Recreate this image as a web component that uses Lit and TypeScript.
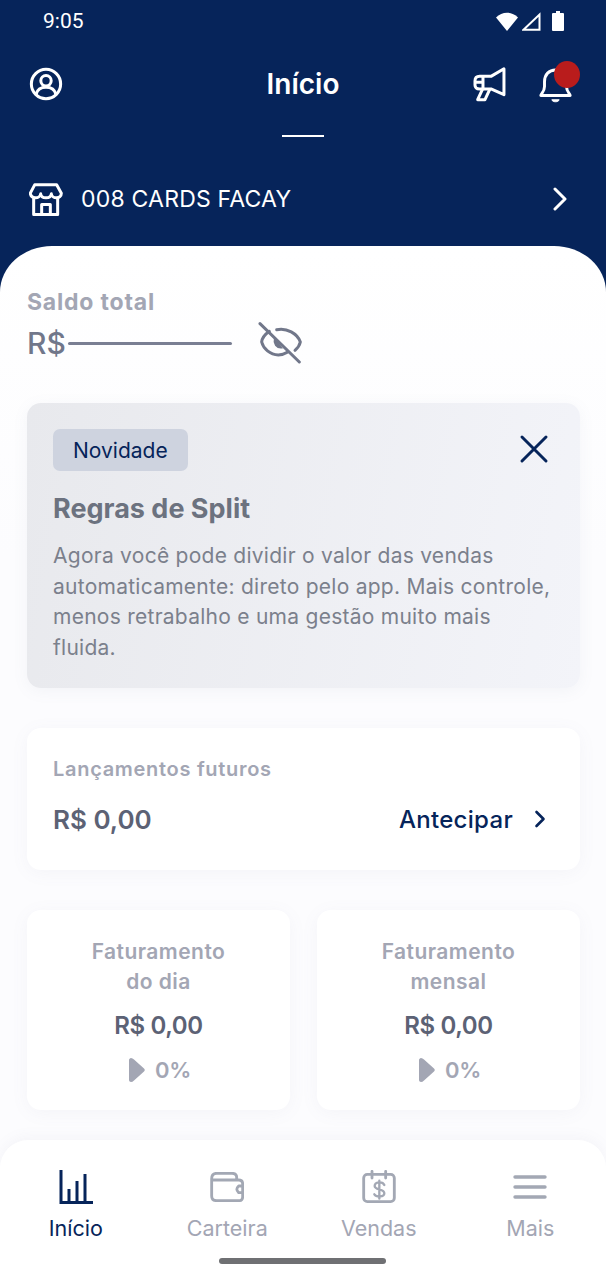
import { LitElement, html, css } from "lit";
import { customElement } from "lit/decorators.js";

const NAVY = "#06245a";

@customElement("app-root")
export class AppRoot extends LitElement {
  static styles = css`
    :host { display: block; width: 606px; height: 1280px; overflow: hidden; font-family: Inter, "Noto Sans", sans-serif; }
    * { box-sizing: border-box; }
    svg { display: block; flex: none; }
    .page { position: relative; width: 606px; height: 1280px; background: #06245a; display: flex; flex-direction: column; color: #fff; }
    .status { height: 42px; padding: 0 42px 0 43px; display: flex; align-items: center; justify-content: space-between; }
    .time { font-family: Roboto, sans-serif; font-size: 21px; }
    .status-icons { display: flex; align-items: center; gap: 4px; }
    .batt { margin-left: 7px; }
    .top { height: 84px; padding: 0 32px 0 29px; display: flex; align-items: center; justify-content: space-between; }
    .top h1 { margin: 0; font-size: 28px; font-weight: 600; position: absolute; left: 0; right: 0; text-align: center; pointer-events: none; }
    .top-actions { display: flex; align-items: center; gap: 33px; }
    .bell { position: relative; width: 35px; height: 42px; padding-top: 2px; }
    .dot { position: absolute; right: -6px; top: -2px; width: 26px; height: 27px; border-radius: 50%; background: #b91c1c; }
    .rule { width: 42px; height: 2px; background: #fff; margin: 9px auto 0; }
    .store { height: 112px; padding: 12px 38px 0 29px; display: flex; align-items: center; justify-content: space-between; }
    .store-l { display: flex; align-items: center; gap: 18px; font-size: 23px; letter-spacing: .2px; font-weight: 400; }
    .sheet { flex: 1; background: linear-gradient(#ffffff, #fcfcfe 30%); border-radius: 52px 52px 0 0 / 46px 46px 0 0; margin-top: -3px; padding: 41px 26px 0 27px; color: #6b7280; min-height: 0; overflow: hidden; }
    .saldo-l { font-size: 23px; font-weight: 700; color: #a3a6b4; line-height: 30px; letter-spacing: .8px; }
    .saldo { height: 52px; display: flex; align-items: center; }
    .saldo .cur { font-size: 30px; font-weight: 500; color: #71778a; }
    .saldo .mask { width: 164px; height: 3px; border-radius: 2px; background: #7a7f93; margin: 0 26px 0 2px; }
    .banner { margin-top: 34px; height: 285px; border-radius: 14px; background: linear-gradient(100deg, #e8e9ed, #f3f4f9); padding: 26px 26px 0 26px; box-shadow: 0 3px 16px rgba(120,125,150,.07); position: relative; }
    .tag { display: inline-flex; align-items: center; height: 42px; padding: 0 20px; border-radius: 7px; background: #ced3df; color: #06245a; font-size: 21px; }
    .close { position: absolute; right: 31px; top: 31px; }
    .banner h2 { margin: 19px 0 0; font-size: 27px; line-height: 38px; font-weight: 700; color: #6c727f; letter-spacing: 0; }
    .banner p { margin: 13px 0 0; font-size: 21px; line-height: 30.5px; color: #7b808c; letter-spacing: .26px; white-space: nowrap; }
    .card { background: #fff; border-radius: 14px; box-shadow: 0 3px 18px rgba(120,125,160,.06); }
    .future { margin-top: 40px; height: 142px; padding: 26px 34px 0 26px; }
    .future .lbl { font-size: 20px; font-weight: 600; color: #a3a6b4; line-height: 30px; letter-spacing: .7px; }
    .future .row { display: flex; align-items: center; justify-content: space-between; margin-top: 10px; height: 50px; }
    .future .val { font-size: 26px; font-weight: 600; color: #5c6275; position: relative; }
    .ante { display: flex; align-items: center; gap: 21px; font-size: 24px; font-weight: 500; color: #06245a; letter-spacing: .3px; }
    .pair { margin-top: 40px; display: grid; grid-template-columns: 263px 263px; justify-content: space-between; }
    .tile { height: 200px; padding-top: 27px; text-align: center; display: flex; flex-direction: column; align-items: center; }
    .tile .t { font-size: 21px; font-weight: 600; line-height: 30px; color: #a3a6b4; letter-spacing: .45px; }
    .tile .v { margin-top: 12px; font-size: 24px; line-height: 34px; font-weight: 600; color: #5c6275; letter-spacing: -.4px; }
    .tile .pc { margin: 10px 0 0 3px; display: flex; align-items: center; gap: 10px; font-size: 22px; line-height: 34px; font-weight: 600; color: #a3a6b4; letter-spacing: -.3px; }
    .nav { position: absolute; left: 0; right: 0; bottom: 0; height: 140px; background: #fff; border-radius: 28px 28px 0 0; box-shadow: 0 -3px 14px rgba(120,125,160,.06); display: grid; grid-template-columns: 151.5px 151.5px 151.5px 151.5px; }
    .tab { display: flex; flex-direction: column; align-items: center; padding-top: 25px; color: #a3a6b4; font-size: 21.5px; }
    .tab.on { color: #06245a; }
    .tab .ic { height: 44px; display: flex; align-items: center; justify-content: center; }
    .tab span { margin-top: 4px; line-height: 30px; }
    .home { position: absolute; left: 219px; bottom: 16px; width: 167px; height: 6px; border-radius: 3px; background: #6f7073; }
  `;

  render() {
    const navy = NAVY;
    const gray = "#a3a8b4";
    return html`<div class="page">
      <div class="status">
        <span class="time">9:05</span>
        <div class="status-icons">
          <svg width="22" height="19" viewBox="0 0 22 19"><path d="M0 5.5 C6 -1 16 -1 22 5.5 L11 19 Z" fill="#fff"/></svg>
          <svg width="19" height="19" viewBox="0 0 19 19"><path d="M1.5 17.8 L17.5 2.5 V17.8 Z" fill="none" stroke="#fff" stroke-width="2"/></svg>
          <svg class="batt" width="12" height="20" viewBox="0 0 12 20"><path d="M4 0 H8 V2 H11 a1 1 0 0 1 1 1 V19 a1 1 0 0 1 -1 1 H1 a1 1 0 0 1 -1 -1 V3 a1 1 0 0 1 1 -1 H4 Z" fill="#fff"/></svg>
        </div>
      </div>
      <div class="top">
        <svg width="34" height="34" viewBox="0 0 36 36" fill="none" stroke="#fff" stroke-width="3.2"><circle cx="18" cy="18" r="15.5"/><circle cx="18" cy="14.5" r="5.5"/><path d="M7.5 29 C9 23 13 21.5 18 21.5 C23 21.5 27 23 28.5 29"/></svg>
        <h1>Início</h1>
        <div class="top-actions">
          <svg width="33.3" height="35" viewBox="22 20 100 105" fill="none" stroke="#fff" stroke-width="9" stroke-linejoin="round" stroke-linecap="round"><path d="M115 25 L76 48 H42 Q28 48 28 62 V74 Q28 86 42 86 H76 L115 103 Z"/><path d="M52 50 V84 M30 66 H52"/><path d="M50 88 L36 118 H58 L72 88"/></svg>
          <div class="bell">
            <svg width="33" height="41" viewBox="0 0 36 42" fill="none" stroke="#fff" stroke-width="3.2" stroke-linejoin="round"><path d="M2 32 C2 30 6 28 6 22 V17 C6 9 11 4 18 4 C25 4 30 9 30 17 V22 C30 28 34 30 34 32 Z"/><path d="M14 36.5 H22 C21.5 39.5 14.5 39.5 14 36.5 Z" fill="#fff" stroke-width="1"/></svg>
            <div class="dot"></div>
          </div>
        </div>
      </div>
      <div class="rule"></div>
      <div class="store">
        <div class="store-l">
          <svg width="34" height="33" viewBox="25 18 102 98" fill="none" stroke="#fff" stroke-width="9" stroke-linejoin="round" stroke-linecap="round"><path d="M42 23 H108 L122 48 C122 66 94 66 92 50 C90 66 62 66 60 50 C58 66 30 66 29 48 Z"/><path d="M39 64 V112 H111 V64"/><path d="M63 112 V82 H89 V112"/></svg>
          <span>008 CARDS FACAY</span>
        </div>
        <svg width="16" height="24" viewBox="0 0 16 24" fill="none" stroke="#fff" stroke-width="3" stroke-linecap="round" stroke-linejoin="round"><path d="M3 2 L13 12 L3 22"/></svg>
      </div>
      <div class="sheet">
        <div class="saldo-l">Saldo total</div>
        <div class="saldo">
          <span class="cur">R$</span><div class="mask"></div>
          <svg width="44" height="42" viewBox="24 20 132 126" fill="none" stroke="#71778a" stroke-width="9" stroke-linecap="round"><path d="M30 25 L148 140"/><path d="M58 48 C44 58 36 70 35 80 C40 100 60 118 85 119 C95 119 104 116 112 111"/><path d="M80 43 C110 36 143 55 151 80 C149 90 143 98 135 105"/><path d="M74 72 C70 84 80 98 94 97 Z" fill="#71778a" stroke-width="5"/></svg>
        </div>
        <div class="banner">
          <div class="tag">Novidade</div>
          <svg class="close" width="30" height="30" viewBox="0 0 30 30" fill="none" stroke="${navy}" stroke-width="3" stroke-linecap="round"><path d="M3 3 L27 27 M27 3 L3 27"/></svg>
          <h2>Regras de Split</h2>
          <p>Agora você pode dividir o valor das vendas<br>automaticamente: direto pelo app. Mais controle,<br>menos retrabalho e uma gestão muito mais<br>fluida.</p>
        </div>
        <div class="card future">
          <div class="lbl">Lançamentos futuros</div>
          <div class="row">
            <span class="val">R$ 0,00</span>
            <span class="ante">Antecipar
              <svg width="12" height="18" viewBox="0 0 12 18" fill="none" stroke="${navy}" stroke-width="2.6" stroke-linecap="round" stroke-linejoin="round"><path d="M2.5 2 L9.5 9 L2.5 16"/></svg>
            </span>
          </div>
        </div>
        <div class="pair">
          ${this.tile("Faturamento", "do dia")}
          ${this.tile("Faturamento", "mensal")}
        </div>
      </div>
      <div class="nav">
        <div class="tab on"><div class="ic"><svg width="34" height="34" viewBox="0 0 34 34" fill="none" stroke="${navy}" stroke-width="3"><path d="M2 0 V32.5 H34"/><path d="M10 19 V32 M18 11 V32 M26 4 V32"/></svg></div><span>Início</span></div>
        <div class="tab"><div class="ic"><svg width="34" height="30" viewBox="30 36 102 90" fill="none" stroke="${gray}" stroke-width="8.5" stroke-linejoin="round"><path d="M110 60 V52 Q110 40 96 40 H50 Q35 40 35 56 V108 Q35 122 50 122 H116 Q128 122 128 110 V72 Q128 60 116 60 H35"/><path d="M128 78 H116 Q105 88 116 98 H128"/></svg></div><span>Carteira</span></div>
        <div class="tab"><div class="ic"><svg width="34" height="33.3" viewBox="485 30 102 100" fill="none" stroke="${gray}" stroke-width="8.5" stroke-linecap="round"><rect x="490" y="43" width="92" height="82" rx="11"/><path d="M515 34 V54 M556 34 V54"/><path d="M552 75 C547 63 523 65 523 78 C523 91 552 85 552 100 C552 112 528 112 522 103 M537 62 V116" stroke-width="7"/></svg></div><span>Vendas</span></div>
        <div class="tab"><div class="ic"><svg width="34" height="24" viewBox="0 0 34 24" fill="none" stroke="${gray}" stroke-width="3.4" stroke-linecap="round"><path d="M2 2 H32 M2 12 H32 M2 22 H32"/></svg></div><span>Mais</span></div>
      </div>
      <div class="home"></div>
    </div>`;
  }

  tile(a: string, b: string) {
    return html`<div class="card tile">
      <div class="t">${a}<br>${b}</div>
      <div class="v">R$ 0,00</div>
      <div class="pc"><svg width="16" height="24" viewBox="0 0 16 24"><path d="M2 0 C1 0 0 1 0 2 V22 C0 23 1 24 2 24 C3 24 4 23.5 5 22.5 L15 13.5 C16 12.5 16 11.5 15 10.5 L5 1.5 C4 .5 3 0 2 0 Z" fill="#a3a6b4"/></svg>0%</div>
    </div>`;
  }
}
